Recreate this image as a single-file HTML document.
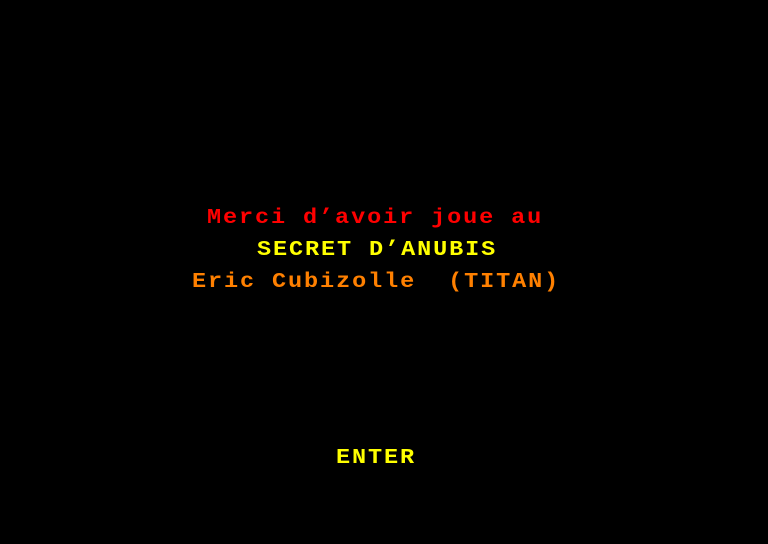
<!DOCTYPE html>
<html><head><meta charset="utf-8"><style>
html,body{margin:0;padding:0;background:#000;width:768px;height:544px;overflow:hidden}
.t{position:absolute;font-family:"Liberation Mono",monospace;font-weight:bold;font-size:21px;line-height:16px;letter-spacing:1.69px;white-space:pre;transform:scaleX(1.12);transform-origin:0 0}
</style></head><body>
<div class="t" style="left:207px;top:211px;color:#ff0000">Merci d’avoir joue au</div>
<div class="t" style="left:257px;top:243px;color:#ffff00">SECRET D’ANUBIS</div>
<div class="t" style="left:192px;top:275px;color:#ff8000">Eric Cubizolle  (TITAN)</div>
<div class="t" style="left:336px;top:451px;color:#ffff00">ENTER</div>
</body></html>
